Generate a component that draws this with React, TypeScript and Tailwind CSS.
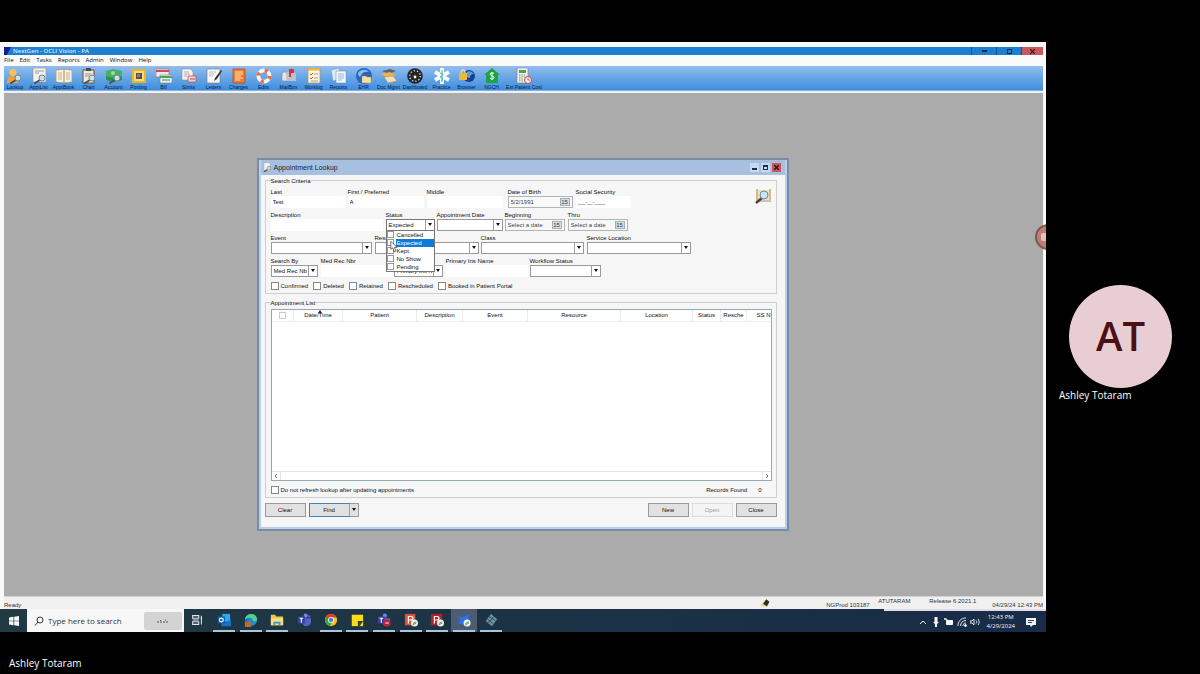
import type { ReactNode } from "react";

const TINY = "font-['Liberation_Sans',sans-serif] text-[6px] leading-[8px]";

/* ---------- shared bits ---------- */

const Lens = () => (
  <>
    <path d="M9 12l-5 3" stroke="#55504c" strokeWidth="2" strokeLinecap="round" />
    <circle cx="11" cy="10" r="3" fill="#c9e2f0" stroke="#75838d" />
  </>
);

const Icon = ({ children, className = "size-4" }: { children: ReactNode; className?: string }) => (
  <svg viewBox="0 0 16 16" fill="none" className={`${className} shrink-0`} aria-hidden="true">
    {children}
  </svg>
);

const Page = ({ fill = "#f4f0ea" }: { fill?: string }) => (
  <path d="M3 1h10v13H3z" fill={fill} stroke="#8b8f98" strokeWidth=".6" />
);

/* ---------- toolbar ---------- */

const tools: { name: string; width?: string; icon: ReactNode }[] = [
  {
    name: "Lookup",
    width: "w-[22px]",
    icon: (
      <>
        <path d="M0 15c0-5 2-7 5-7s6 2 6 7z" fill="#f0a02c" />
        <circle cx="6" cy="4.500" r="3.600" fill="#f7be62" />
        <Lens />
      </>
    ),
  },
  {
    name: "ApptList",
    icon: (
      <>
        <path d="M2 0h13v14H2z" fill="#f4f0ea" stroke="#8b8f98" strokeWidth=".6" />
        <path d="M4 3h9M4 5h4" stroke="#a29f9b" />
        <Lens />
      </>
    ),
  },
  {
    name: "ApptBook",
    icon: (
      <>
        <path d="M0 2l8-1 8 1v12l-8 1-8-1z" fill="#f6efe0" stroke="#a08b6c" strokeWidth=".7" />
        <path d="M8 1v14" stroke="#a08b6c" />
        <path d="M2 5h4M2 7h4M2 9h4M2 11h4M10 5h4M10 7h4M10 9h4M10 11h4" stroke="#d3a46d" strokeWidth=".8" />
      </>
    ),
  },
  {
    name: "Chart",
    icon: (
      <>
        <path d="M2 2h11v13H2z" fill="#eee7de" stroke="#65503f" />
        <path d="M5 0h5v3H5z" fill="#514a49" />
        <path d="M4 6h6M4 8h4" stroke="#9d9791" />
        <Lens />
      </>
    ),
  },
  {
    name: "Account",
    icon: (
      <>
        <path d="M0 3l7-2 9 2v5l-8 2-8-2z" fill="#46b065" />
        <path d="M0 8l8 2 8-2v4l-8 2-8-2z" fill="#2e8e4d" />
        <circle cx="7" cy="5" r="2" fill="#9ddda8" />
        <Lens />
      </>
    ),
  },
  {
    name: "Posting",
    icon: (
      <>
        <path d="M1 1h14v14H1z" fill="#e9b52c" />
        <path d="M3 3h10v10H3z" fill="#f6de6b" />
        <path d="M5 5h6v6H5z" fill="#5a4d5d" />
        <path d="M6 6h3v3H6z" fill="#8d7391" />
      </>
    ),
  },
  {
    name: "Bill",
    icon: (
      <>
        <path d="M0 1h13v8H0z" fill="#f2e9e9" stroke="#996b74" strokeWidth=".6" />
        <path d="M0 2h13v2H0z" fill="#cf4a5d" />
        <path d="M4 7h12v8H4z" fill="#e6efe8" stroke="#678772" strokeWidth=".6" />
        <path d="M4 8h12v2H4z" fill="#48a069" />
        <path d="M6 12h8" stroke="#66776c" />
      </>
    ),
  },
  {
    name: "Stmts",
    icon: (
      <>
        <path d="M1 1h9l2 3v8H1z" fill="#f5f3f2" stroke="#8d8f98" strokeWidth=".6" />
        <path d="M3 4h5M3 6h6M3 8h3" stroke="#9aa0b0" strokeWidth=".8" />
        <path d="M7 8h8v6H7z" fill="#f0d5d5" stroke="#b5565c" strokeWidth=".8" />
        <path d="M9 11h5" stroke="#c1454c" />
      </>
    ),
  },
  {
    name: "Letters",
    icon: (
      <>
        <path d="M1 1h13v14H1z" fill="#faf8f4" stroke="#7b808a" strokeWidth=".7" />
        <path d="M3 4h7M3 6h5M3 8h4" stroke="#a7adb9" strokeWidth=".8" />
        <path d="M15 2L9 10l-1 3 3-2 5-8z" fill="#33363e" />
      </>
    ),
  },
  {
    name: "Charges",
    icon: (
      <>
        <path d="M2 1h12v14H2z" fill="#ef7c31" stroke="#a9480f" strokeWidth=".7" />
        <path d="M4 4h8M4 6h8M4 8h6M4 10h8M4 12h5" stroke="#fbe0bf" strokeWidth="1.200" />
      </>
    ),
  },
  {
    name: "Edits",
    icon: (
      <>
        <circle cx="8" cy="8" r="5.500" stroke="#f7f4f1" strokeWidth="4" />
        <circle cx="8" cy="8" r="5.500" stroke="#e8703b" strokeWidth="4" strokeDasharray="3 5.640" />
        <circle cx="8" cy="8" r="3.400" fill="#6da6e2" />
      </>
    ),
  },
  {
    name: "MailBox",
    icon: (
      <>
        <path d="M1 7c0-4 5-4 5 0v6H1z" fill="#e8e4e6" stroke="#8b8c97" strokeWidth=".6" />
        <path d="M4 4h8c2 0 3 1 3 3v6H6V7c0-2-1-3-2-3z" fill="#bfc1ce" />
        <path d="M8 9V1h5v4h-3v4z" fill="#d43535" />
      </>
    ),
  },
  {
    name: "Worklog",
    icon: (
      <>
        <path d="M2 0h12v15H2z" fill="#f8f3df" stroke="#b39a56" strokeWidth=".7" />
        <path d="M2 0h12v2.500H2z" fill="#eeb436" />
        <path d="M4 6l1 1 2-2M4 10l1 1 2-2" stroke="#d9553c" />
        <path d="M8 6h4M8 10h4M5 13h7" stroke="#93917f" strokeWidth=".8" />
      </>
    ),
  },
  {
    name: "Reports",
    icon: (
      <>
        <path d="M0 2l8-2 2 11-8 2z" fill="#dcebf8" stroke="#7792b5" strokeWidth=".6" />
        <path d="M5 3h10v12H5z" fill="#f5fafd" stroke="#7792b5" strokeWidth=".6" />
        <path d="M7 6h6M7 8h6M7 10h6M7 12h4" stroke="#7da2cd" strokeWidth=".8" />
      </>
    ),
  },
  {
    name: "EHR",
    icon: (
      <>
        <circle cx="8" cy="8" r="8" fill="#2865bd" />
        <path d="M2 5c3-4 8-4 11-1-4-1-7 0-9 5-2-1-2-3-2-4z" fill="#8cbcf0" />
        <path d="M6 8h4l1 1h4v6H6z" fill="#f4dfa6" stroke="#b6924e" strokeWidth=".5" />
      </>
    ),
  },
  {
    name: "Doc Mgmt",
    icon: (
      <>
        <path d="M1 3l8-2 6 2-7 3z" fill="#66625e" />
        <path d="M0 6l9-2 6 3-8 3z" fill="#e2b45e" />
        <path d="M3 9l9-1 4 5-9 2z" fill="#f3e0b5" stroke="#a88546" strokeWidth=".5" />
      </>
    ),
  },
  {
    name: "Dashboard",
    width: "w-7",
    icon: (
      <>
        <circle cx="8" cy="8" r="7.800" fill="#26262a" />
        <circle cx="8" cy="8" r="5.300" stroke="#d5d5d5" strokeWidth="1.500" strokeDasharray="1.200 2.100" />
        <circle cx="8" cy="9" r="1.400" fill="#fff" />
      </>
    ),
  },
  {
    name: "Practice",
    icon: (
      <>
        <path d="M8 0v16M1 4l14 8M15 4L1 12" stroke="#f4fafc" strokeWidth="4" />
        <path d="M8 2v12M6 5c4 1 4 2 0 4 4 1 3 2 1 4" stroke="#4ba8a2" strokeWidth=".9" />
      </>
    ),
  },
  {
    name: "Browser",
    icon: (
      <>
        <circle cx="10" cy="8" r="6" fill="#193f8f" />
        <path d="M7 5c2-3 6-2 8 1-3 0-4 1-4 4-3 0-4-2-4-5z" fill="#53a2df" />
        <path d="M0 5h8v7H0z" fill="#f0b73d" />
        <path d="M2 5c0-4 4-4 4 0" stroke="#e9d9a5" strokeWidth="1.300" />
      </>
    ),
  },
  {
    name: "NGCH",
    icon: (
      <>
        <path d="M8 0l8 7h-2v8H2V7H0z" fill="#18a544" />
        <path d="M10 5.500c-1-1-4-1-4 .6C6 8 10 7.500 10 9.600c0 1.700-3 1.700-4 .6M8 4v8" stroke="#fff" />
      </>
    ),
  },
  {
    name: "Est Patient Cost",
    width: "w-10",
    icon: (
      <>
        <path d="M1 0h11v15H1z" fill="#f4f4ee" stroke="#77776f" strokeWidth=".6" />
        <path d="M3 2h7v3H3z" fill="#599b57" />
        <path d="M3 7h7M3 9h7M3 11h5M3 13h5" stroke="#6c8a68" strokeDasharray="1.400 1" />
        <circle cx="12" cy="12" r="3.500" fill="#fbeeee" stroke="#c84649" />
        <path d="M12 10v2h2" stroke="#c84649" strokeWidth=".8" />
      </>
    ),
  },
];

const Toolbar = () => (
  <div className="flex h-[25px] bg-linear-to-b from-[#93bdec] via-[#66a5e6] via-50% to-[#3f8ddd] pt-0.5 border-b border-[#7fb0e4]">
    {tools.map((tool) => (
      <button key={tool.name} type="button" className={`${tool.width ?? "w-[25px]"} flex shrink-0 flex-col items-center`}>
        <Icon>{tool.icon}</Icon>
        <span className="font-['Liberation_Sans',sans-serif] text-[5px] leading-[6px] whitespace-nowrap text-[#061a40]">
          {tool.name}
        </span>
      </button>
    ))}
  </div>
);

/* ---------- form controls ---------- */

const Arrow = () => (
  <span className="pointer-events-none absolute inset-y-0 right-0 flex w-[9px] items-center justify-center border-l border-[#a0a0a0]">
    <svg viewBox="0 0 4 3" className="h-[3px] w-1" aria-hidden="true">
      <path d="M0 0h4L2 3z" fill="#111" />
    </svg>
  </span>
);

const Field = ({ id, label, className, children }: { id: string; label: string; className: string; children: ReactNode }) => (
  <div className={`${className} shrink-0`}>
    <label htmlFor={id} className="block h-2 whitespace-nowrap">
      {label}
    </label>
    {children}
  </div>
);

const TextField = ({ id, label, className, value = "" }: { id: string; label: string; className: string; value?: string }) => (
  <Field id={id} label={label} className={className}>
    <input id={id} type="text" defaultValue={value} className="block h-3 w-full bg-white px-0.5 outline-none" />
  </Field>
);

const SelectField = ({ id, label, className, value = "" }: { id: string; label: string; className: string; value?: string }) => (
  <Field id={id} label={label} className={className}>
    <div className="relative h-3 border border-[#9a9a9a] bg-white">
      <select id={id} className="block h-full w-full appearance-none pr-2.5 pl-0.5 outline-none">
        <option>{value}</option>
      </select>
      <Arrow />
    </div>
  </Field>
);

const DateField = ({ id, label, className, value }: { id: string; label: string; className: string; value: string }) => (
  <Field id={id} label={label} className={className}>
    <div className="flex h-3 items-center border border-[#b4b4b4] bg-[#f8f8f8] pr-0.5">
      <input id={id} type="text" defaultValue={value} className="h-full min-w-0 flex-1 pl-0.5 text-[#444] outline-none" />
      <button
        type="button"
        aria-label={`${label} calendar`}
        className="flex h-2 w-2.5 items-center justify-center border border-[#a3b1b9] bg-[#d3dce1] leading-[6px] text-[#30434e]"
      >
        15
      </button>
    </div>
  </Field>
);

const Check = ({ label, className = "" }: { label: string; className?: string }) => (
  <label className={`flex h-2 items-center gap-0.5 whitespace-nowrap ${className}`}>
    <input type="checkbox" className="size-2 shrink-0 appearance-none border border-[#888] bg-white" />
    {label}
  </label>
);

const statuses = ["Cancelled", "Expected", "Kept", "No Show", "Pending"];

const StatusField = () => (
  <div className="relative w-[49px] shrink-0">
    <label htmlFor="status" className="block h-2">
      Status
    </label>
    <button id="status" type="button" aria-haspopup="listbox" className="relative block h-3 w-full border border-[#777] bg-white px-0.5 text-left">
      Expected
      <Arrow />
    </button>
    <div className="absolute top-[19px] left-0 z-10 w-full border border-[#777] bg-white">
      {statuses.map((s) => (
        <label key={s} className="flex h-2 items-center gap-0.5">
          <input
            type="checkbox"
            defaultChecked={s === "Expected"}
            className="size-[7px] shrink-0 appearance-none border border-[#999] bg-white"
          />
          <span className={`flex-1 pl-px ${s === "Expected" ? "bg-[#0d7bd8] text-white" : ""}`}>{s}</span>
        </label>
      ))}
      <svg viewBox="0 0 10 14" className="absolute top-2.5 left-[3px] h-3 w-2" aria-hidden="true">
        <path d="M1 0v10l2.500-2 2 5 2-1-2-4.500H9z" fill="#fff" stroke="#222" strokeWidth=".8" />
      </svg>
    </div>
  </div>
);

/* ---------- appointment lookup ---------- */

const columns = [
  { name: "Date/Time", width: "w-[49px]" },
  { name: "Patient", width: "w-[74px]" },
  { name: "Description", width: "w-[46px]" },
  { name: "Event", width: "w-[65px]" },
  { name: "Resource", width: "w-[93px]" },
  { name: "Location", width: "w-[72px]" },
  { name: "Status", width: "w-[28px]" },
  { name: "Resche", width: "w-[26px]" },
  { name: "SS N", width: "" },
];

const dialogButton = "h-3.5 w-[41px] border border-[#999] bg-[#e1e1e1]";

const Criteria = () => (
  <fieldset className="border border-[#cfcfcf] pr-1 pb-[3px] pl-[5px]">
    <legend>Search Criteria</legend>
    <div className="flex flex-col gap-[3px] pt-[3px]">
      <div className="flex">
        <TextField id="last" label="Last" value="Test" className="mr-0.5 w-[75px]" />
        <TextField id="first" label="First / Preferred" value="A" className="mr-[3px] w-[76px]" />
        <TextField id="middle" label="Middle" className="mr-[5px] w-[76px]" />
        <DateField id="dob" label="Date of Birth" value="5/2/1991" className="mr-[3px] w-[65px]" />
        <TextField
          id="ssn"
          label="Social Security"
          value="___-__-____"
          className="w-[55px] font-['Open_Sans',sans-serif] [&>label]:font-['Liberation_Sans',sans-serif]"
        />
        <button type="button" aria-label="Search" className="mr-px ml-auto size-4">
          <Icon>
            <path d="M1 2h14v10H1z" fill="#e9e0cd" />
            <path d="M2 1v11M15 1v11" stroke="#cda967" strokeWidth="1.500" />
            <path d="M1 13h15" stroke="#a99567" />
            <path d="M7 10l-6 5" stroke="#444" strokeWidth="2.400" />
            <circle cx="9" cy="7" r="4" fill="#cfe4f2" stroke="#6f8596" />
          </Icon>
        </button>
      </div>
      <div className="flex">
        <TextField id="description" label="Description" className="mr-[3px] w-[112px]" />
        <StatusField />
        <SelectField id="date" label="Appointment Date" className="mr-0.5 ml-0.5 w-[66px]" />
        <DateField id="beginning" label="Beginning" value="Select a date" className="mr-[3px] w-[60px]" />
        <DateField id="thru" label="Thru" value="Select a date" className="w-[60px]" />
      </div>
      <div className="flex">
        <SelectField id="event" label="Event" className="mr-[3px] w-[101px]" />
        <SelectField id="resource" label="Resource" className="mr-0.5 w-[104px]" />
        <SelectField id="class" label="Class" className="mr-[3px] w-[103px]" />
        <SelectField id="location" label="Service Location" className="w-[104px]" />
      </div>
      <div className="flex items-end">
        <SelectField id="searchBy" label="Search By" value="Med Rec Nbr" className="mr-[3px] w-[47px]" />
        <TextField id="medRec" label="Med Rec Nbr" className="mr-px w-[72px]" />
        <div className="relative mr-[3px] h-3 w-[49px] shrink-0 border border-[#9a9a9a] bg-white">
          <select aria-label="Insurance search by" className="block h-full w-full appearance-none pr-2.5 pl-0.5 outline-none">
            <option>Primary Ins N</option>
          </select>
          <Arrow />
        </div>
        <TextField id="insurance" label="Primary Ins Name" className="mr-0.5 w-[82px]" />
        <SelectField id="workflow" label="Workflow Status" className="w-[71px]" />
      </div>
    </div>
    <div className="mt-[5px] flex gap-[5px]">
      <Check label="Confirmed" />
      <Check label="Deleted" />
      <Check label="Retained" />
      <Check label="Rescheduled" />
      <Check label="Booked in Patient Portal" />
    </div>
  </fieldset>
);

const AppointmentList = () => (
  <fieldset className="mt-[5px] min-w-0 border border-[#cfcfcf] pr-1 pb-[3px] pl-[5px]">
    <legend>Appointment List</legend>
    <div className="mt-0.5 flex h-[172px] flex-col overflow-hidden border border-[#93a9b3] bg-white">
      <table className="w-full table-fixed border-collapse">
        <thead>
          <tr className="h-3 border-b border-[#ececec]">
            <th className="w-[22px] border-r border-[#ececec]">
              <input
                type="checkbox"
                aria-label="Select all appointments"
                className="mx-auto block size-[7px] appearance-none border border-[#ccc]"
              />
            </th>
            {columns.map((c) => (
              <th key={c.name} className={`${c.width} relative border-r border-[#ececec] font-normal whitespace-nowrap last:border-0 last:text-right`}>
                {c.name === "Date/Time" && (
                  <svg viewBox="0 0 4 3" className="absolute top-0 left-1/2 h-[3px] w-1" aria-hidden="true">
                    <path d="M0 3h4L2 0z" fill="#222" />
                  </svg>
                )}
                {c.name}
              </th>
            ))}
          </tr>
        </thead>
      </table>
      <div className="mt-auto flex h-[9px] items-center justify-between border-t border-[#e3e3e3] text-[#666]">
        <button type="button" aria-label="Scroll left" className="flex h-full w-[9px] items-center justify-center border-r border-[#e3e3e3]">
          <svg viewBox="0 0 4 6" className="h-1.5 w-1" fill="none" stroke="currentColor" aria-hidden="true">
            <path d="M3 1L1 3l2 2" />
          </svg>
        </button>
        <button type="button" aria-label="Scroll right" className="flex h-full w-[9px] items-center justify-center border-l border-[#e3e3e3]">
          <svg viewBox="0 0 4 6" className="h-1.5 w-1" fill="none" stroke="currentColor" aria-hidden="true">
            <path d="M1 1l2 2-2 2" />
          </svg>
        </button>
      </div>
    </div>
    <div className="mt-[5px] flex items-center">
      <Check label="Do not refresh lookup after updating appointments" />
      <span className="mr-[11px] ml-auto">Records Found</span>
      <span className="mr-2.5">0</span>
    </div>
  </fieldset>
);

const LookupDialog = () => (
  <section className={`${TINY} w-[532px] max-w-full border-2 border-[#7a8ba5] bg-[#b9cfea] px-0.5 pb-0.5 text-[#111]`}>
    <header className="flex h-[15px] items-center bg-[#a7c0e0] pr-1 pl-px">
      <Icon className="size-2.5">
        <Page />
        <Lens />
      </Icon>
      <h1 className="ml-0.5 flex-1 pt-0.5 text-[7px] leading-[8px] text-[#1c2635]">Appointment Lookup</h1>
      <div className="flex gap-0.5">
        <button type="button" aria-label="Minimize" className="flex size-[9px] items-end justify-center bg-[#c6d9f0] pb-0.5">
          <span className="h-0.5 w-[5px] bg-[#1b2d4d]" />
        </button>
        <button type="button" aria-label="Maximize" className="flex size-[9px] items-center justify-center bg-[#c6d9f0]">
          <span className="size-[5px] border border-t-2 border-[#1b2d4d]" />
        </button>
        <button type="button" aria-label="Close window" className="flex size-[9px] items-center justify-center bg-[#c6575a]">
          <svg viewBox="0 0 5 5" className="size-[5px]" stroke="#2a1018" strokeWidth="1.300" aria-hidden="true">
            <path d="M0 0l5 5M5 0L0 5" />
          </svg>
        </button>
      </div>
    </header>
    <form className="bg-[#f6f6f6] pt-0.5 pr-2 pb-[10px] pl-1">
      <Criteria />
      <AppointmentList />
      <div className="mt-[5px] flex gap-[3px]">
        <button type="button" className={dialogButton}>
          Clear
        </button>
        <div className="flex">
          <button type="button" className="h-3.5 w-[41px] border border-[#3f86bd] bg-[#e1e1e1]">
            Find
          </button>
          <button type="button" aria-label="Find options" className="relative h-3.5 w-[9px] border border-l-0 border-[#999] bg-[#e1e1e1]">
            <Arrow />
          </button>
        </div>
        <button type="button" className={`${dialogButton} ml-auto`}>
          New
        </button>
        <button type="button" disabled className="h-3.5 w-[41px] border border-[#ddd] bg-[#f4f4f4] text-[#999]">
          Open
        </button>
        <button type="button" className={dialogButton}>
          Close
        </button>
      </div>
    </form>
  </section>
);

/* ---------- taskbar ---------- */

const apps: { name: string; open: boolean; active?: boolean; icon: ReactNode }[] = [
  {
    name: "Task View",
    open: false,
    icon: <path d="M3 3h7v3H3zM3 10h7v3H3zM3 8h7M13 3v10M12 6h2" stroke="#dfe5ea" strokeWidth="1.200" />,
  },
  {
    name: "Outlook",
    open: true,
    icon: (
      <>
        <path d="M6 1h9v9H6z" fill="#35a7e8" />
        <path d="M5 7l5 4 6-4v8H5z" fill="#1671c9" />
        <path d="M1 4h8v8H1z" fill="#0f5baa" />
        <circle cx="5" cy="8" r="2.200" stroke="#fff" strokeWidth="1.300" />
      </>
    ),
  },
  {
    name: "Edge",
    open: true,
    icon: (
      <>
        <circle cx="8" cy="8" r="7" fill="#1b8fd3" />
        <path d="M1 8C2-1 14-1 15 7c0 3-5 3-5 1 0-3-6-4-9 0z" fill="#55cf8e" />
        <path d="M4 9c0 4 4 6 8 5-5 3-11 0-11-6 1-1 3-2 5-1-1 0-2 1-2 2z" fill="#116bb3" />
        <path d="M1 10h7v6H1z" fill="#b86e2e" />
      </>
    ),
  },
  {
    name: "File Explorer",
    open: true,
    icon: (
      <>
        <path d="M1 2h5l1 2h8v10H1z" fill="#f2c34b" />
        <path d="M1 6h14v8H1z" fill="#f9dc83" />
        <path d="M4 10h8v4h-2v-2H6v2H4z" fill="#3f94c8" />
      </>
    ),
  },
  {
    name: "Teams",
    open: false,
    icon: (
      <>
        <circle cx="10" cy="3" r="2.300" fill="#7b83eb" />
        <circle cx="14" cy="4" r="1.500" fill="#5059c9" />
        <path d="M6 6h10v4c0 3-3 5-6 5s-4-3-4-5z" fill="#5961c6" />
        <path d="M1 4h8v8H1z" fill="#3b429f" />
        <path d="M3 6h4M5 6v5" stroke="#fff" strokeWidth="1.200" />
      </>
    ),
  },
  {
    name: "Chrome",
    open: true,
    icon: (
      <>
        <circle cx="8" cy="8" r="7" fill="#fbc116" />
        <path d="M2 4.500A7 7 0 0 1 14.300 5H8L5 9.500z" fill="#e33b2e" />
        <path d="M2 4.500L5.500 10 9 11l-2 4A7 7 0 0 1 2 4.500z" fill="#2da94f" />
        <circle cx="8" cy="8" r="3.300" fill="#fff" />
        <circle cx="8" cy="8" r="2.500" fill="#3f7fe8" />
      </>
    ),
  },
  {
    name: "Sticky Notes",
    open: true,
    icon: (
      <>
        <path d="M2 2h13v13H2z" fill="#fbdc1c" />
        <path d="M9 9h6l-4 6H9z" fill="#3d3a22" />
      </>
    ),
  },
  {
    name: "Teams meeting",
    open: true,
    icon: (
      <>
        <circle cx="9" cy="3" r="2.300" fill="#7b83eb" />
        <path d="M6 6h9v4c0 3-3 5-5 5s-4-3-4-5z" fill="#5961c6" />
        <path d="M1 4h8v8H1z" fill="#3b429f" />
        <path d="M3 6h4M5 6v5" stroke="#fff" strokeWidth="1.200" />
        <circle cx="11.500" cy="11.500" r="4" fill="#c4203e" />
        <path d="M9.500 11.500h4" stroke="#fff" />
      </>
    ),
  },
  {
    name: "PowerPoint",
    open: true,
    icon: (
      <>
        <path d="M1 1h12v13H1z" fill="#d9523a" />
        <path d="M5 12V4h3c3 0 3 4 0 4H5" stroke="#fff" strokeWidth="1.400" />
        <circle cx="12" cy="11.500" r="4" fill="#eef4ee" />
        <path d="M10 12l4-2M10 13.500l4-2" stroke="#3a8b52" />
      </>
    ),
  },
  {
    name: "PDF",
    open: true,
    icon: (
      <>
        <path d="M1 1h13v13H1z" fill="#b81f2c" />
        <path d="M5 12V4h3c3 0 3 4 0 4H5" stroke="#fff" strokeWidth="1.400" />
        <circle cx="12" cy="11.500" r="4" fill="#eef4ee" />
        <path d="M10 12l4-2M10 13.500l4-2" stroke="#3a8b52" />
      </>
    ),
  },
  {
    name: "NextGen",
    open: true,
    active: true,
    icon: (
      <>
        <path d="M0 4l6 1 8-4-1 6 3 2-8 4-7-1 3-4z" fill="#2f6ff0" />
        <circle cx="11.500" cy="11.500" r="4" fill="#eef4ee" />
        <path d="M9.500 12l4-2M9.500 13.500l4-2" stroke="#3a8b52" />
      </>
    ),
  },
  {
    name: "Remote",
    open: true,
    icon: (
      <>
        <path d="M8 1l7 6-6 8-7-6z" fill="#6d91a5" />
        <path d="M4 7l6 5M6 4l7 5M11 4l-6 7" stroke="#28414f" />
      </>
    ),
  },
];

const Taskbar = () => (
  <div className="flex h-[23px] bg-linear-to-r from-[#213a42] to-[#182b48] font-['Open_Sans',sans-serif]">
    <button type="button" aria-label="Start" className="flex w-[27px] shrink-0 items-center justify-center">
      <svg viewBox="0 0 10 10" className="size-2.5" fill="#f4f8fa" aria-hidden="true">
        <path d="M0 1.400L4.500.8v3.900H0zM5.200.7L10 0v4.700H5.200zM0 5.300h4.500v3.900L0 8.600zM5.200 5.300H10V10l-4.800-.7z" />
      </svg>
    </button>
    <div className="flex w-[157px] shrink-0 items-center bg-[#f7f7f7] pr-0.5 pl-[7px]">
      <svg viewBox="0 0 10 10" className="size-2.5 shrink-0" fill="none" stroke="#333" aria-hidden="true">
        <circle cx="6" cy="4" r="3" />
        <path d="M4 6L1 9.500" />
      </svg>
      <input
        type="text"
        aria-label="Search"
        placeholder="Type here to search"
        className="ml-1 min-w-0 flex-1 text-[8px] leading-[12px] outline-none placeholder:text-[#333]"
      />
      <span className="flex h-[18px] w-[38px] items-center justify-center rounded-xs bg-[#d3d3d3]">
        <svg viewBox="0 0 14 4" className="h-1 w-3.5" aria-hidden="true">
          <path d="M1 3h12M4 1.500h1M9 1h1" stroke="#555" strokeWidth="1.200" strokeDasharray="2 1" />
        </svg>
      </span>
    </div>
    <div className="grid w-80 shrink-0 grid-cols-12">
      {apps.map((app) => (
        <button
          key={app.name}
          type="button"
          aria-label={app.name}
          className={`flex flex-col items-center justify-between pt-1 ${app.active ? "bg-[#4d5c72]" : ""}`}
        >
          <Icon className="size-3.5">{app.icon}</Icon>
          {app.open && <span className="h-0.5 w-[22px] bg-[#a9c6dd]" />}
        </button>
      ))}
    </div>
    <div className="ml-auto flex w-[162px] shrink-0 items-center justify-end gap-[3px] border-t-2 border-[#e4dbe9] pr-2.5 text-[#f4f7fa]">
      <svg viewBox="0 0 10 10" className="size-2.5" fill="none" stroke="currentColor" aria-hidden="true">
        <path d="M2 7l3-3 3 3" />
      </svg>
      <svg viewBox="0 0 10 10" className="size-2.5" fill="currentColor" aria-hidden="true">
        <path d="M3.500 0h3v6h-3zM2 5h6L5 8zM4 7h2v3H4z" />
      </svg>
      <svg viewBox="0 0 10 10" className="size-2.5" fill="none" stroke="currentColor" aria-hidden="true">
        <path d="M2.500 3.500h6v4h-6z" fill="currentColor" />
        <path d="M0 2h3v3M1 1v2" />
      </svg>
      <svg viewBox="0 0 10 10" className="size-2.5" fill="none" stroke="currentColor" strokeWidth=".9" aria-hidden="true">
        <path d="M1 9c0-5 3-8 8-8M3.500 9c0-3 2-5.500 5.500-5.500M6 9c0-2 1-3 3-3" />
        <circle cx="8.500" cy="8.500" r="1" fill="currentColor" />
      </svg>
      <svg viewBox="0 0 10 10" className="size-2.5" fill="none" stroke="currentColor" strokeWidth=".9" aria-hidden="true">
        <path d="M0 4h2l2-2v6L2 6H0zM6 3.500c1 1 1 2 0 3M8 2c1.500 2 1.500 4 0 6" />
      </svg>
      <div className="mx-1 text-center text-[6px] leading-[9px]">
        <p>12:43 PM</p>
        <p>4/29/2024</p>
      </div>
      <svg viewBox="0 0 10 10" className="ml-1 size-2.5" aria-hidden="true">
        <path d="M0 1h10v7H7L5 10 4 8H0z" fill="#f0f3f6" />
        <path d="M2 3.500h6M2 5.500h4" stroke="#31435c" />
      </svg>
    </div>
  </div>
);

/* ---------- shared desktop ---------- */

const menus = ["File", "Edit", "Tasks", "Reports", "Admin", "Window", "Help"];

const SharedScreen = () => (
  <main className="relative flex min-w-0 flex-1 flex-col overflow-hidden">
    <div className="flex flex-1 flex-col border-t-[5px] border-r-[3px] border-l-4 border-[#f7f8fa]">
      <div className="flex h-2 items-center overflow-hidden bg-[#1b80d2]">
        <svg viewBox="0 0 8 8" className="size-2" aria-hidden="true">
          <path d="M0 0h7L3 8H0z" fill="#12218c" />
        </svg>
        <span className="ml-px font-['Open_Sans',sans-serif] text-[6px] leading-[6px] font-semibold text-[#d6ebfb]">NextGen - OCLI Vision - PA</span>
        <div className="ml-auto flex h-full">
          <button type="button" aria-label="Minimize" className="flex w-[25px] items-center justify-center border-l border-[#0e5593]">
            <span className="h-0.5 w-[5px] bg-[#0b2b4c]" />
          </button>
          <button type="button" aria-label="Restore" className="flex w-[25px] items-center justify-center border-l border-[#0e5593]">
            <span className="size-[5px] border border-[#0b2b4c]" />
          </button>
          <button type="button" aria-label="Close" className="flex w-[22px] items-center justify-center border-l border-[#0e5593] bg-[#c9575b]">
            <svg viewBox="0 0 5 5" className="size-[5px]" stroke="#3a1018" strokeWidth="1.200" aria-hidden="true">
              <path d="M0 0l5 5M5 0L0 5" />
            </svg>
          </button>
        </div>
      </div>
      <nav className="flex h-[11px] items-center gap-1.5 bg-[#fafafa] font-['Open_Sans',sans-serif] text-[6px] leading-[11px] font-medium text-[#111]">
        {menus.map((menu) => (
          <a key={menu} href="#">
            {menu}
          </a>
        ))}
      </nav>
      <Toolbar />
      <div className="flex flex-1 items-center justify-center border-t-2 border-[#eef2f7] bg-[#ababab] pr-0.5 pb-px">
        <LookupDialog />
      </div>
      <footer className={`${TINY} flex h-[13px] items-center overflow-hidden border-t border-[#d5d3d6] bg-[#f0f0f0] text-[#333]`}>
        <span className="self-end">Ready</span>
        <Icon className="ml-auto size-2.5">
          <path d="M1 12l8-9 6 3-3 8z" fill="#e1d46b" />
          <path d="M5 9l5-7 5 4-4 7z" fill="#2f2c20" />
        </Icon>
        <div className="ml-14 flex h-full shrink-0 gap-2 whitespace-nowrap">
          <span className="w-11 self-end">NGProd 103187</span>
          <span className="w-[43px] self-start">ATUTARAM</span>
          <span className="w-[55px] self-start">Release 6.2021.1</span>
          <span className="self-end">04/29/24 12:43 PM</span>
        </div>
      </footer>
    </div>
    <Taskbar />
    <span className="absolute top-[182px] -right-[15px] size-[26px] rounded-full border-2 border-[#805550] bg-[#b98078]">
      <span className="mt-[7px] ml-1 block size-2 rounded-xs bg-[#e3c3bc]" />
    </span>
  </main>
);

export default function App() {
  return (
    <div className="flex min-h-screen flex-col bg-black pt-[42px]">
      <div className="flex flex-1">
        <SharedScreen />
        <aside className="flex w-[154px] shrink-0 flex-col justify-center pt-3 pr-[18px] pl-[13px] font-['Open_Sans',sans-serif]">
          <div className="flex size-[103px] items-center justify-center self-center rounded-full bg-[#e8ced2] text-[40px] leading-none font-semibold text-[#4d0f16]">
            AT
          </div>
          <p className="text-[10px] leading-[14px] text-white">Ashley Totaram</p>
        </aside>
      </div>
      <p className="h-[42px] px-[9px] pt-6 font-['Open_Sans',sans-serif] text-[10px] leading-[14px] text-white">Ashley Totaram</p>
    </div>
  );
}
